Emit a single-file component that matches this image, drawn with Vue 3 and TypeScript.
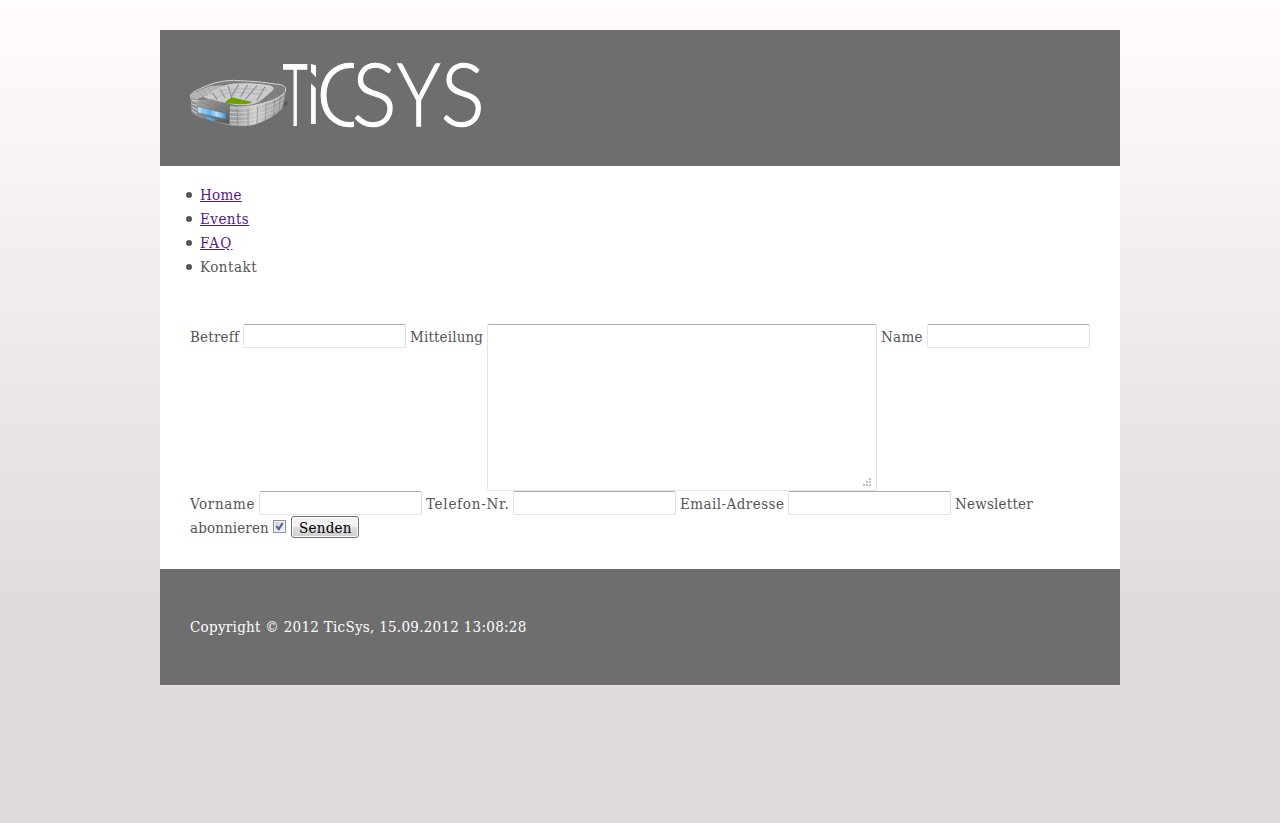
<script setup lang="ts">
import { ref } from 'vue'

interface NavItem { label: string; cls: string; link: boolean }

const nav: NavItem[] = [
  { label: 'Home', cls: 'home', link: true },
  { label: 'Events', cls: 'events', link: true },
  { label: 'FAQ', cls: 'faq', link: true },
  { label: 'Kontakt', cls: 'kontakt', link: false },
]

const betreff = ref('')
const mitteilung = ref('')
const name = ref('')
const vorname = ref('')
const telefon = ref('')
const email = ref('')
const newsletter = ref(true)
</script>

<template>
  <div class="page">
    <header class="header">
      <svg class="logo" viewBox="0 0 960 270" role="img" aria-label="TicSys">
        <defs>
          <linearGradient id="wall" x1="0" x2="1">
            <stop offset="0" stop-color="#8e8e8e" />
            <stop offset="0.5" stop-color="#a2a2a2" />
            <stop offset="0.68" stop-color="#cfcfcf" />
            <stop offset="1" stop-color="#929292" />
          </linearGradient>
          <linearGradient id="front" x1="0" x2="1" y1="0" y2="1">
            <stop offset="0" stop-color="#a8a8a8" />
            <stop offset="1" stop-color="#555" />
          </linearGradient>
          <linearGradient id="glass" x1="0" x2="1">
            <stop offset="0" stop-color="#b5e5ff" />
            <stop offset="0.4" stop-color="#64b5f6" />
            <stop offset="0.7" stop-color="#b5e2ff" />
            <stop offset="1" stop-color="#2a91e2" />
          </linearGradient>
          <clipPath id="stem"><path d="M385 92 L420 127 L420 240 L385 240Z" /></clipPath>
          <clipPath id="arc"><path d="M410 20 H522 V250 H410Z" /></clipPath>
        </defs>
        <path d="M300 152 Q326 152 324 160 Q314 174 292 182Z" fill="#595959" />
        <path d="M31 136 L34 184 Q38 195 60 202 L130 222 Q178 234 220 225 Q272 210 306 178 Q314 160 317 122 L300 104Z" fill="url(#wall)" />
        <path d="M31 138 Q32 128 58 117 Q106 92 160 91 Q232 92 302 104 Q322 110 316 124 Q302 146 255 158 Q190 177 147 170 L100 158 L42 151 Q31 147 31 138Z" fill="#7f7f7f" stroke="#d2d2d2" stroke-width="3" />
        <path d="M73 140 Q112 108 160 102 Q216 97 272 108 Q284 112 277 121 L244 149 Q234 158 214 162 Q171 169 140 157 L96 151Z" fill="#cbcbcb" stroke="#e0e0e0" stroke-width="2" />
        <path d="M32 133 Q66 117 88 109 L130 105 L76 137 L49 149 Q33 147 32 133Z" fill="#b5b5b5" />
        <path d="M52 122 L74 145 M66 115 L82 139 M82 108 L94 131" stroke="#9b9b9b" stroke-width="2" />
        <path d="M88 135 Q125 118 170 117 Q216 114 262 121 M104 144 Q138 127 168 126 L247 133" fill="none" stroke="#aaa" stroke-width="2" />
        <path d="M98 129 L112 149 M120 117 L136 144 M145 108 L154 140 M176 103 L153 142 M203 105 L182 140 M232 106 L196 148 M255 110 L230 153" fill="none" stroke="#8a919b" stroke-width="3.5" />
        <path d="M137 154 L155 142 L217 156 Q210 163 182 163 L139 160Z" fill="#6da000" />
        <path d="M47 154 L93 147 L150 165 L148 222 Q99 216 52 195Z" fill="url(#front)" />
        <path d="M64 157 L139 185 M78 154 L145 176 M91 151 L149 169" stroke="#808080" stroke-width="2" />
        <path d="M54 172 L138 191 L138 207 L54 187Z" fill="url(#glass)" />
        <path d="M69 175 L69 191 M91 181 L91 195 M116 187 L116 202" stroke="#338fcf" stroke-width="1" />
        <path d="M76 197 L105 208 L104 214 L80 207Z" fill="#48a9ef" />
        <path d="M35 151 L49 156 M34 161 L51 167 M35 171 L52 179 M36 181 L51 190" stroke="#d0d0d0" stroke-width="3" />
        <path d="M149 175 Q206 182 251 162 Q287 151 313 132 M149 187 Q206 193 250 175 Q287 164 311 145 M149 199 Q205 205 249 188 Q284 178 309 158 M150 211 Q207 217 248 200 Q282 188 305 170 M151 222 Q205 226 244 212" fill="none" stroke="#dcdcdc" stroke-width="2" />
        <path d="M172 175 L173 227 M204 176 L204 228 M233 169 L231 222 M259 160 L256 211 M284 150 L281 198 M301 140 L297 183" stroke="#808080" stroke-width="2" />
        <g class="wordmark">
          <text class="stem" x="309" y="226" textLength="73" lengthAdjust="spacingAndGlyphs">T</text>
          <g clip-path="url(#stem)">
            <text class="stem" x="379" y="220" textLength="43" lengthAdjust="spacingAndGlyphs">i</text>
          </g>
          <path class="dot" d="M393 42 L408 46 V82 L393 66Z" />
          <g clip-path="url(#arc)">
            <text x="409" y="227" textLength="175" lengthAdjust="spacingAndGlyphs">C</text>
          </g>
          <text x="516" y="227" textLength="134" lengthAdjust="spacingAndGlyphs">S</text>
          <text x="651" y="227" textLength="130" lengthAdjust="spacingAndGlyphs">Y</text>
          <text x="782" y="227" textLength="132" lengthAdjust="spacingAndGlyphs">S</text>
        </g>
      </svg>
    </header>

    <main class="main">
      <ul class="nav">
        <li v-for="item in nav" :key="item.label">
          <a v-if="item.link" href="#" :class="item.cls">{{ item.label }}</a>
          <span v-else :class="item.cls">{{ item.label }}</span>
        </li>
      </ul>

      <form class="form" @submit.prevent>
        <div class="row">
          <label class="betreff" for="betreff">Betreff</label>
          <input id="betreff" v-model="betreff" class="field" type="text">
          <label class="mitteilung" for="mitteilung">Mitteilung</label>
          <div class="area">
            <textarea id="mitteilung" v-model="mitteilung" />
            <svg class="grip" viewBox="0 0 8 8">
              <path d="M6 0h2v2h-2z M3 3h2v2h-2z M6 3h2v2h-2z M0 6h2v2h-2z M3 6h2v2h-2z M6 6h2v2h-2z" fill="#c0c0c0" />
            </svg>
          </div>
          <label class="name" for="name">Name</label>
          <input id="name" v-model="name" class="field" type="text">
        </div>
        <div class="row">
          <label class="vorname" for="vorname">Vorname</label>
          <input id="vorname" v-model="vorname" class="field" type="text">
          <label class="telefon" for="telefon">Telefon-Nr.</label>
          <input id="telefon" v-model="telefon" class="field" type="text">
          <label class="email" for="email">Email-Adresse</label>
          <input id="email" v-model="email" class="field" type="text">
          <label class="newsletter" for="newsletter">Newsletter</label>
        </div>
        <div class="row">
          <label class="abonnieren" for="newsletter">abonnieren</label>
          <span class="check">
            <input id="newsletter" v-model="newsletter" type="checkbox">
            <svg v-if="newsletter" viewBox="0 0 13 13">
              <path d="M3.5 6.2 L5.8 9.2 L9.6 3" fill="none" stroke="#4a5f97" stroke-width="2" />
            </svg>
          </span>
          <button type="submit"><span class="senden">Senden</span></button>
        </div>
      </form>
    </main>

    <footer class="footer"><p class="copy">Copyright © 2012 TicSys, 15.09.2012 13:08:28</p></footer>
  </div>
</template>

<style>
body {
  margin: 0;
  background: #e0dcdb linear-gradient(#fffcfb, #e0dcdb) no-repeat 0 0 / 100% 600px;
}
</style>

<style scoped>
.page {
  width: 960px;
  margin: 0 auto;
  padding-top: 30px;
  font: 15px/24px "DejaVu Serif Condensed", "DejaVu Serif", serif;
  font-stretch: condensed;
  color: #555;
}
.header {
  box-sizing: border-box;
  height: 136px;
  padding: 20px;
  background: #6e6e6e;
}
.logo { display: block; width: 320px; height: 90px; overflow: visible; }
.wordmark {
  font-family: Lato, sans-serif;
  font-size: 260px;
  font-weight: 300;
  fill: #fff;
  stroke: #fff;
  stroke-width: 4px;
}
.stem { stroke-width: 6.5px; font-size: 257px; }
.dot { stroke: none; }
.main {
  box-sizing: border-box;
  height: 403px;
  padding-top: 17px;
  background: #fff;
}
.nav { margin: 0; padding: 0 0 0 26px; list-style: none; }
.nav li { display: flex; align-items: center; gap: 8px; height: 24px; white-space: nowrap; }
.nav li::before { content: ""; width: 6px; height: 6px; border-radius: 50%; background: #555; }
.nav a { color: #551a8b; }
.home { letter-spacing: 0.3px; }
.events { letter-spacing: 0.45px; }
.faq { letter-spacing: 1.2px; }
.kontakt { letter-spacing: 0.5px; }
.form { padding: 45px 30px 0; }
.row { display: flex; align-items: flex-start; gap: 4px; }
label { flex: none; height: 24px; line-height: 26px; white-space: nowrap; }
.betreff { width: 49px; letter-spacing: 0.2px; }
.mitteilung { width: 73px; letter-spacing: 0.15px; }
.name { width: 42px; letter-spacing: 0.3px; }
.vorname { width: 65px; letter-spacing: 0.65px; }
.telefon { width: 83px; letter-spacing: 0.75px; }
.email { width: 104px; letter-spacing: 0.45px; }
.newsletter { width: 78px; letter-spacing: 0.2px; }
.abonnieren { width: 79px; letter-spacing: 0.12px; }
.senden { letter-spacing: 0.25px; }
.field, textarea {
  box-sizing: border-box;
  display: block;
  margin: 0;
  padding: 2px;
  border: 1px solid #e2e3ea;
  border-top-color: #abadb3;
  border-right-color: #dbdfe6;
  border-radius: 2px;
  outline: 0;
  background: #fff;
  font: inherit;
}
.field { flex: none; width: 163px; height: 24px; }
.area { position: relative; flex: none; width: 390px; height: 167px; }
textarea { width: 100%; height: 100%; resize: none; }
.grip { position: absolute; right: 6px; bottom: 5px; width: 8px; height: 8px; }
.check { position: relative; width: 13px; height: 13px; margin-top: 5px; }
.check input {
  appearance: none;
  display: block;
  box-sizing: border-box;
  width: 13px;
  height: 13px;
  margin: 0;
  border: 1px solid #8e8f8f;
  background: linear-gradient(135deg, #cbcfd5, #f6f6f6);
  box-shadow: inset 0 0 0 1px #f4f4f4;
}
.check svg { position: absolute; inset: 0; pointer-events: none; }
button {
  box-sizing: border-box;
  width: 68px;
  height: 22px;
  margin: 1px 0 0 1px;
  padding: 0 7px;
  border: 1px solid #707070;
  border-radius: 3px;
  background: linear-gradient(#f2f2f2 0 49%, #ddd 50%, #cfcfcf);
  box-shadow: inset 0 0 0 1px #fbfbfb;
  font: inherit;
  line-height: 22px;
  text-align: left;
  color: #000;
}
.footer {
  box-sizing: border-box;
  height: 116px;
  padding: 46px 30px 0;
  background: #6e6e6e;
  color: #fff;
}
.copy { margin: 0; white-space: nowrap; letter-spacing: 0.28px; }
</style>
